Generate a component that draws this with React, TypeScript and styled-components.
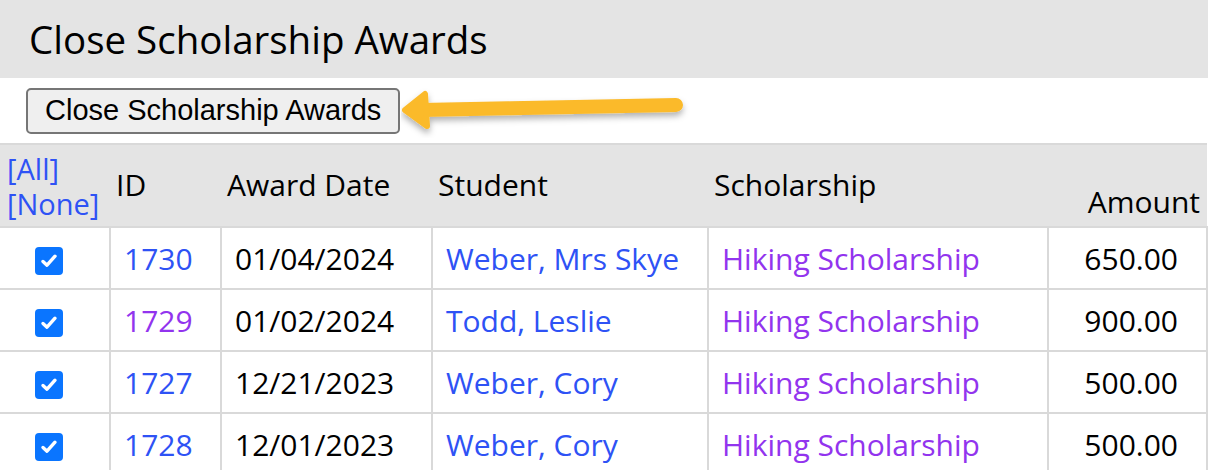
import React from "react";
import styled, { createGlobalStyle } from "styled-components";

interface Award {
  id: string;
  visited?: boolean;
  date: string;
  student: string;
  scholarship: string;
  amount: string;
}

const awards: Award[] = [
  { id: "1730", date: "01/04/2024", student: "Weber, Mrs Skye", scholarship: "Hiking Scholarship", amount: "650.00" },
  { id: "1729", visited: true, date: "01/02/2024", student: "Todd, Leslie", scholarship: "Hiking Scholarship", amount: "900.00" },
  { id: "1727", date: "12/21/2023", student: "Weber, Cory", scholarship: "Hiking Scholarship", amount: "500.00" },
  { id: "1728", date: "12/01/2023", student: "Weber, Cory", scholarship: "Hiking Scholarship", amount: "500.00" },
];

export default function App() {
  return (
    <>
      <GlobalStyle />
      <Page>
        <TitleBar>
          <Title>Close Scholarship Awards</Title>
        </TitleBar>
        <Toolbar>
          <CloseButton type="button">Close Scholarship Awards</CloseButton>
          <Arrow />
        </Toolbar>
        <Table>
          <colgroup>
            <col style={{ width: 110 }} />
            <col style={{ width: 111 }} />
            <col style={{ width: 211 }} />
            <col style={{ width: 276 }} />
            <col style={{ width: 340 }} />
            <col />
          </colgroup>
          <thead>
            <tr>
              <Th>
                <SelectLinks>
                  <SelectLink>[All]</SelectLink>
                  <SelectLink>[None]</SelectLink>
                </SelectLinks>
              </Th>
              <Th>ID</Th>
              <Th>Award Date</Th>
              <Th>Student</Th>
              <Th>Scholarship</Th>
              <Th $bottom $right>
                Amount
              </Th>
            </tr>
          </thead>
          <tbody>
            {awards.map((a) => (
              <tr key={a.id}>
                <Td $center>
                  <Check />
                </Td>
                <Td>
                  <Link $visited={a.visited}>{a.id}</Link>
                </Td>
                <Td>{a.date}</Td>
                <Td>
                  <Link>{a.student}</Link>
                </Td>
                <Td>
                  <Link $visited>{a.scholarship}</Link>
                </Td>
                <Td $right>{a.amount}</Td>
              </tr>
            ))}
          </tbody>
        </Table>
      </Page>
    </>
  );
}

function Check() {
  return (
    <CheckBox>
      <svg width="20" height="20" viewBox="0 0 20 20">
        <path
          d="M4 10.5 L8 14.2 L16 5.2"
          fill="none"
          stroke="#fff"
          strokeWidth="3.4"
          strokeLinecap="round"
          strokeLinejoin="round"
        />
      </svg>
    </CheckBox>
  );
}

function Arrow() {
  return (
    <ArrowSvg width="290" height="50" viewBox="0 0 290 50">
      <defs>
        <filter id="arrowShadow" x="-10%" y="-50%" width="120%" height="200%">
          <feDropShadow dx="0" dy="4" stdDeviation="3" floodColor="#000" floodOpacity="0.3" />
        </filter>
      </defs>
      <g filter="url(#arrowShadow)" fill="#fbba2b" stroke="#fbba2b" strokeLinecap="round" strokeLinejoin="round">
        <path d="M20 22 L275 17" strokeWidth="14" fill="none" />
        <path d="M4 22 L24 6 L26 38 Z" strokeWidth="6" />
      </g>
    </ArrowSvg>
  );
}

const GlobalStyle = createGlobalStyle`
  body {
    margin: 0;
    background: #fff;
    font-family: "Open Sans", "Noto Sans", sans-serif;
  }
`;

const Page = styled.div`
  width: 1208px;
`;

const TitleBar = styled.div`
  background: #e4e4e4;
  height: 78px;
  display: flex;
  align-items: center;
  padding-left: 30px;
`;

const Title = styled.h1`
  margin: 0 0 0 -1px;
  font-size: 38.5px;
  font-weight: 400;
  color: #000;
`;

const Toolbar = styled.div`
  height: 65px;
  display: flex;
  align-items: center;
  padding-left: 26px;
`;

const CloseButton = styled.button`
  height: 46px;
  padding: 0 17px;
  font-family: "Liberation Sans", Arial, sans-serif;
  font-size: 29px;
  color: #000;
  background: #efefef;
  border: 2px solid #767676;
  border-radius: 5px;
`;

const ArrowSvg = styled.svg`
  display: block;
  margin-left: 1px;
  margin-top: 4px;
`;

const Table = styled.table`
  width: 1208px;
  border-collapse: collapse;
  table-layout: fixed;
  font-size: 30px;
  border-top: 2px solid #d9d9d9;
`;

const Th = styled.th<{ $bottom?: boolean; $right?: boolean }>`
  background: #e4e4e4;
  height: 77px;
  padding: ${(p) => (p.$bottom ? "0 7px 4px 6px" : "0 6px 2px 6px")};
  font-weight: 400;
  text-align: ${(p) => (p.$right ? "right" : "left")};
  vertical-align: ${(p) => (p.$bottom ? "bottom" : "middle")};
  white-space: nowrap;
`;

const Td = styled.td<{ $center?: boolean; $right?: boolean }>`
  height: 60px;
  padding: ${(p) => (p.$center ? "0 0 0 12px" : p.$right ? "0 28px 0 0" : "0 13px")};
  border: 2px solid #d9d9d9;
  text-align: ${(p) => (p.$right ? "right" : "left")};
  white-space: nowrap;
  &:first-child {
    border-left: none;
  }
`;

const Link = styled.a<{ $visited?: boolean }>`
  color: ${(p) => (p.$visited ? "#9234ee" : "#2e52f5")};
  text-decoration: none;
`;

const SelectLinks = styled.div`
  display: flex;
  flex-direction: column;
  margin-top: 2px;
`;

const SelectLink = styled.a`
  display: block;
  height: 35px;
  line-height: 35px;
  font-size: 29px;
  color: #2e52f5;
  margin-left: 1px;
`;

const CheckBox = styled.span`
  display: inline-flex;
  align-items: center;
  justify-content: center;
  width: 28px;
  height: 28px;
  margin-left: 23px;
  background: #0a75ff;
  border-radius: 4px;
  vertical-align: middle;
`;
